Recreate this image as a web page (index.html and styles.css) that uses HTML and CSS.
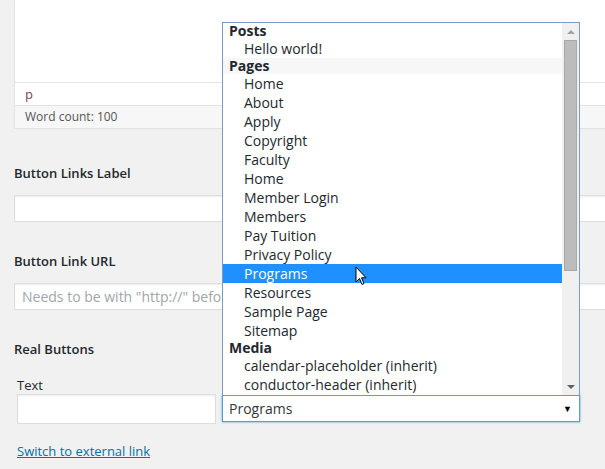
FILE: index.html
```html
<!DOCTYPE html>
<html lang="en">
<head>
    <meta charset="UTF-8">
    <meta name="viewport" content="width=device-width, initial-scale=1.0">
    <title>Button Links</title>
    <link rel="stylesheet" href="styles.css">
</head>
<body>
    <div class="page">
        <div class="editor">
            <div class="editor-area"></div>
            <div class="editor-path">p</div>
            <div class="editor-status">Word count: 100</div>
        </div>

        <div class="field">
            <div class="field-label">Button Links Label</div>
            <input class="text-input" type="text">
        </div>

        <div class="field">
            <div class="field-label">Button Link URL</div>
            <input class="text-input" type="text" placeholder="Needs to be with &quot;http://&quot; before the address">
        </div>

        <div class="field">
            <div class="field-label">Real Buttons</div>
            <div class="button-row">
                <div class="button-text">
                    <div class="small-label">Text</div>
                    <input class="text-input short" type="text">
                </div>
                <div class="link-select">
                    <div class="select-box">
                        <span>Programs</span>
                        <span class="select-arrow">&#9660;</span>
                    </div>

                    <!-- open list of the select -->
                    <div class="select-popup">
                        <div class="select-list">
                            <div class="group">Posts</div>
                            <div class="option">Hello world!</div>
                            <div class="group hover">Pages</div>
                            <div class="option">Home</div>
                            <div class="option">About</div>
                            <div class="option">Apply</div>
                            <div class="option">Copyright</div>
                            <div class="option">Faculty</div>
                            <div class="option">Home</div>
                            <div class="option">Member Login</div>
                            <div class="option">Members</div>
                            <div class="option">Pay Tuition</div>
                            <div class="option">Privacy Policy</div>
                            <div class="option selected">Programs</div>
                            <div class="option">Resources</div>
                            <div class="option">Sample Page</div>
                            <div class="option">Sitemap</div>
                            <div class="group">Media</div>
                            <div class="option">calendar-placeholder (inherit)</div>
                            <div class="option">conductor-header (inherit)</div>
                        </div>
                        <div class="scrollbar">
                            <div class="scroll-arrow up"></div>
                            <div class="scroll-track">
                                <div class="scroll-thumb"></div>
                            </div>
                            <div class="scroll-arrow down"></div>
                        </div>

                        <svg class="cursor" width="14" height="22" viewBox="0 0 14 22">
                            <path d="M1 1 L1 16 L4.5 12.5 L7 18.5 L9 17.5 L6.5 11.8 L11 11.8 Z" fill="#fff" stroke="#000" stroke-width="1" stroke-linejoin="miter"/>
                        </svg>
                    </div>
                </div>
            </div>
            <a class="switch-link" href="#">Switch to external link</a>
        </div>
    </div>
</body>
</html>
```

FILE: styles.css
```css
body {
    margin: 0;
    background-color: #f1f1f1;
    font-family: "Open Sans", "Liberation Sans", sans-serif;
    color: #23282d;
    overflow: hidden;
}
.page {
    width: 640px;
    padding-left: 14px;
}

/* editor box, top part scrolled out of view */
.editor {
    background-color: #fff;
    border-left: 1px solid #e5e5e5;
    box-shadow: 0 1px 1px rgba(0,0,0,0.06);
}
.editor-area {
    height: 82px;
    border-bottom: 1px solid #e5e5e5;
}
.editor-path {
    height: 22px;
    line-height: 22px;
    padding-left: 10px;
    font-size: 13px;
    color: #6e4a63;
    border-bottom: 1px solid #e5e5e5;
}
.editor-status {
    height: 22px;
    line-height: 22px;
    padding-left: 10px;
    font-size: 12px;
    color: #555;
    background-color: #f7f7f7;
}

.field-label {
    margin-top: 35px;
    margin-bottom: 12px;
    font-size: 13px;
    font-weight: 600;
    line-height: 20px;
    color: #23282d;
}
.field + .field .field-label {
    margin-top: 29px;
}
.text-input {
    display: block;
    box-sizing: border-box;
    width: 100%;
    height: 27px;
    margin: 0;
    padding: 3px 7px;
    border: 1px solid #ddd;
    background-color: #fff;
    font-family: inherit;
    font-size: 14px;
    color: #32373c;
    box-shadow: inset 0 1px 2px rgba(0,0,0,0.07);
}
.text-input::placeholder {
    color: #a0a5aa;
}

.button-row {
    display: flex;
    align-items: flex-end;
    gap: 6px;
    padding-left: 3px;
}
.small-label {
    font-size: 13px;
    line-height: 18px;
    margin-top: 5px;
}
.text-input.short {
    width: 199px;
    height: 30px;
}
.link-select {
    position: relative;
    margin-bottom: 2px;
}
.select-box {
    box-sizing: border-box;
    width: 358px;
    height: 27px;
    display: flex;
    align-items: center;
    justify-content: space-between;
    padding: 0 7px 0 6px;
    background-color: #fff;
    border: 1px solid #5b9dd9;
    box-shadow: 0 0 2px rgba(30,140,190,0.8);
    font-size: 14px;
    color: #32373c;
}
.select-arrow {
    font-size: 9px;
    color: #000;
}

.select-popup {
    position: absolute;
    left: 0;
    bottom: 100%;
    box-sizing: border-box;
    width: 358px;
    height: 373px;
    display: flex;
    background-color: #fff;
    border: 1px solid #7a9cc0;
    border-bottom: none;
    overflow: hidden;
}
.select-list {
    flex: 1;
    overflow: hidden;
}
.group,
.option {
    font-size: 14px;
    white-space: nowrap;
    color: #23282d;
}
.group {
    height: 16px;
    line-height: 16px;
    padding-left: 6px;
    font-weight: 700;
}
.group.hover {
    background-color: #f7f7f7;
}
.option {
    height: 19px;
    line-height: 19px;
    padding-left: 21px;
}
.option.selected {
    background-color: #1e90ff;
    color: #fff;
}

.scrollbar {
    width: 17px;
    display: flex;
    flex-direction: column;
    background-color: #f0f0f0;
}
.scroll-arrow {
    height: 17px;
    display: flex;
    align-items: center;
    justify-content: center;
}
.scroll-arrow::after {
    content: "";
    border-left: 4px solid transparent;
    border-right: 4px solid transparent;
}
.scroll-arrow.up::after {
    border-bottom: 4px solid #a3a3a3;
}
.scroll-arrow.down::after {
    border-top: 4px solid #606060;
}
.scroll-track {
    flex: 1;
    padding: 0 2px;
}
.scroll-thumb {
    height: 231px;
    background-color: #bcbcbc;
    border: 1px solid #a8a8a8;
    box-sizing: border-box;
}

.cursor {
    position: absolute;
    left: 132px;
    top: 243px;
}

.switch-link {
    display: inline-block;
    margin-top: 18px;
    margin-left: 3px;
    font-size: 13px;
    line-height: 18px;
    color: #0073aa;
}
```
